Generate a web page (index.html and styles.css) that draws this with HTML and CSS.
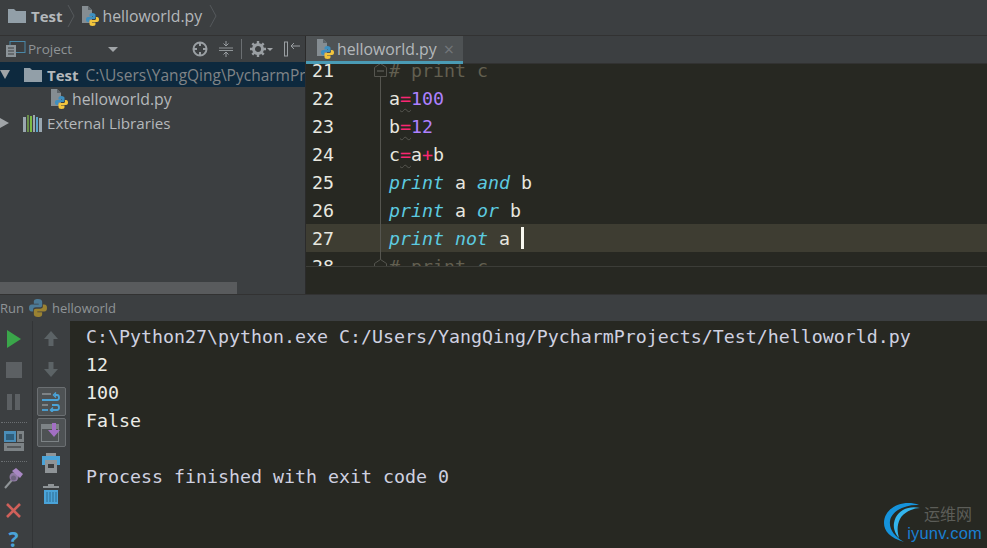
FILE: index.html
```html
<!DOCTYPE html>
<html lang="en">
<head>
  <meta charset="UTF-8">
  <title>helloworld.py - PyCharm</title>
  <link rel="stylesheet" href="styles.css">
</head>
<body>
  <svg class="defs" width="0" height="0">
    <symbol id="py" viewBox="0 0 18 20">
      <path d="M1 0h6l4 4v13H1z" fill="#858d92"/>
      <path d="M7 0v4h4z" fill="#5d6469"/>
      <path d="M11.500 7C9 7 8.500 8 8.500 9V10.500H12V11H7C5.500 11 5 12 5 13.500C5 15 5.500 16 7 16H8V14.500C8 13.500 8.800 13 10 13H13C14 13 14.500 12.400 14.500 11.500V9C14.500 8 13.500 7 11.500 7z" fill="#3d8fc0"/>
      <path d="M11.500 20C14 20 14.500 19 14.500 18V16.500H11V16H16C17.500 16 18 15 18 13.500C18 12 17.500 11 16 11H15V12.500C15 13.500 14.200 14 13 14H10C9 14 8.500 14.600 8.500 15.500V18C8.500 19 9.500 20 11.500 20z" fill="#f2c53d"/>
    </symbol>
    <symbol id="folder" viewBox="0 0 18 14">
      <path d="M0 0h6l2 2h10v12H0z" fill="#929fa8"/>
    </symbol>
    <symbol id="fold" viewBox="0 0 13 14">
      <path d="M0.500 4.500L6.500 0.500l6 4v9h-12z" fill="#272822" stroke="#55554f"/>
      <path d="M3 8h7" stroke="#6b6b64"/>
    </symbol>
  </svg>

  <header class="crumbs">
    <svg class="ico-folder"><use href="#folder"/></svg>
    <b class="crumb-name">Test</b>
    <svg class="sep" width="8" height="22" viewBox="0 0 8 22"><path d="M1 0l6 11-6 11" fill="none" stroke="#55595c"/></svg>
    <svg class="ico-py"><use href="#py"/></svg>
    <span class="crumb-file">helloworld.py</span>
    <svg class="sep" width="8" height="22" viewBox="0 0 8 22"><path d="M1 0l6 11-6 11" fill="none" stroke="#55595c"/></svg>
  </header>

  <div class="main">
    <aside class="side">
      <div class="side-bar">
        <svg width="22" height="16" viewBox="0 0 22 16" class="proj-ico">
          <rect x="5" y="0.500" width="15" height="11" fill="none" stroke="#4a88a8"/>
          <rect x="1" y="4" width="10" height="12" fill="#8c9499"/>
          <path d="M3 7h6M3 10h6M3 13h6" stroke="#3c3f41"/>
        </svg>
        <span class="side-title">Project</span>
        <span class="caret"></span>
        <svg class="tool tool-target" width="16" height="16" viewBox="0 0 16 16"><circle cx="8" cy="8" r="6.500" fill="none" stroke="#9a9fa3" stroke-width="2"/><path d="M8 1v4M8 11v4M1 8h4M11 8h4" stroke="#9a9fa3" stroke-width="2"/></svg>
        <svg class="tool tool-collapse" width="16" height="16" viewBox="0 0 16 16"><path d="M1 7h14M1 9.500h14" stroke="#8f9497"/><path d="M8 0v4M5.500 2.500L8 5l2.500-2.500M8 16v-4M5.500 13.500L8 11l2.500 2.500" fill="none" stroke="#9a9fa3"/></svg>
        <span class="tool-div"></span>
        <svg class="tool tool-gear" width="16" height="16" viewBox="0 0 16 16"><circle cx="8" cy="8" r="4.500" fill="none" stroke="#9a9fa3" stroke-width="3"/><path d="M8 0v3M8 13v3M0 8h3M13 8h3M2.300 2.300l2 2M11.700 11.700l2 2M2.300 13.700l2-2M11.700 4.300l2-2" stroke="#9a9fa3" stroke-width="2.400"/></svg>
        <span class="caret small"></span>
        <svg class="tool tool-hide" width="16" height="16" viewBox="0 0 16 16"><rect x="0.500" y="1" width="3" height="14" fill="none" stroke="#9a9fa3"/><path d="M16 5H7M10 2L7 5l3 3" fill="none" stroke="#9a9fa3"/></svg>
      </div>
      <div class="tree">
        <div class="row row-sel">
          <span class="arrow down"></span>
          <svg class="ico-folder"><use href="#folder"/></svg>
          <b class="root-name">Test</b>
          <span class="root-path">C:\Users\YangQing\PycharmProjects\Test</span>
        </div>
        <div class="row row-file">
          <svg class="ico-py"><use href="#py"/></svg>
          <span>helloworld.py</span>
        </div>
        <div class="row">
          <span class="arrow right"></span>
          <svg class="lib" width="19" height="17" viewBox="0 0 19 17">
            <rect x="0" y="2" width="3" height="15" fill="#9aa7b0"/>
            <rect x="4" y="0" width="2" height="17" fill="#6a8f4a"/>
            <rect x="7" y="1" width="2" height="16" fill="#7dbb45"/>
            <rect x="10" y="0" width="2" height="17" fill="#9aa7b0"/>
            <rect x="13" y="2" width="2" height="15" fill="#5ba3c9"/>
            <rect x="16" y="3" width="3" height="14" fill="#9aa7b0"/>
          </svg>
          <span class="lib-name">External Libraries</span>
        </div>
      </div>
      <div class="side-scroll"><div class="side-thumb"></div></div>
    </aside>

    <section class="editor">
      <div class="tabs">
        <div class="tab">
          <svg class="ico-py"><use href="#py"/></svg>
          <span class="tab-name">helloworld.py</span>
          <span class="tab-x">×</span>
        </div>
      </div>
      <div class="code-view">
        <div class="code">
          <div class="line"><span class="num">21</span><span class="gut gut-low"></span><svg class="fold"><use href="#fold"/></svg><span class="cm"># print c</span></div>
          <div class="line"><span class="num">22</span><span class="gut"></span><span>a<i class="op warn">=</i><i class="n">100</i></span></div>
          <div class="line"><span class="num">23</span><span class="gut"></span><span>b<i class="op warn">=</i><i class="n">12</i></span></div>
          <div class="line"><span class="num">24</span><span class="gut"></span><span>c<i class="op warn">=</i>a<i class="op">+</i>b</span></div>
          <div class="line"><span class="num">25</span><span class="gut"></span><span><em>print</em> a <em>and</em> b</span></div>
          <div class="line"><span class="num">26</span><span class="gut"></span><span><em>print</em> a <em>or</em> b</span></div>
          <div class="line line-cur"><span class="num">27</span><span class="gut"></span><span><em>print</em> <em>not</em> a <span class="caret-bar"></span></span></div>
          <div class="line"><span class="num">28</span><span class="gut gut-high"></span><svg class="fold"><use href="#fold"/></svg><span class="cm"># print c</span></div>
        </div>
      </div>
    </section>
  </div>

  <div class="run-head">
    <span>Run</span>
    <svg class="run-py" width="18" height="18" viewBox="5 7 13 13">
      <path d="M11.500 7C9 7 8.500 8 8.500 9V10.500H12V11H7C5.500 11 5 12 5 13.500C5 15 5.500 16 7 16H8V14.500C8 13.500 8.800 13 10 13H13C14 13 14.500 12.400 14.500 11.500V9C14.500 8 13.500 7 11.500 7z" fill="#4c7a96"/>
      <path d="M11.500 20C14 20 14.500 19 14.500 18V16.500H11V16H16C17.500 16 18 15 18 13.500C18 12 17.500 11 16 11H15V12.500C15 13.500 14.200 14 13 14H10C9 14 8.500 14.600 8.500 15.500V18C8.500 19 9.500 20 11.500 20z" fill="#9a8232"/>
    </svg>
    <span>helloworld</span>
  </div>

  <div class="run">
    <div class="rail rail-a">
      <svg class="r1" width="14" height="18" viewBox="0 0 14 18"><path d="M0 0l14 9-14 9z" fill="#3aa64a"/></svg>
      <span class="stop"></span>
      <span class="pause"><i></i><i></i></span>
      <span class="dots"></span>
      <svg class="r-layout" width="20" height="20" viewBox="0 0 20 20">
        <rect x="0" y="0" width="12" height="11" fill="#4a8db8"/><rect x="2" y="3" width="8" height="6" fill="#2f5e7c"/>
        <rect x="13" y="0" width="7" height="11" fill="#7d8386"/><rect x="15" y="3" width="3" height="5" fill="#4a4f52"/>
        <rect x="0" y="12" width="20" height="8" fill="#7d8386"/><rect x="3" y="15" width="14" height="2" fill="#55595c"/>
      </svg>
      <span class="dots d2"></span>
      <svg class="r-pin" width="20" height="22" viewBox="0 0 20 22"><path d="M1 21l7-8" stroke="#8f9497" stroke-width="2"/><circle cx="10" cy="10" r="4.500" fill="#8f7aa3"/><path d="M8 4l4-3 7 6-3 4z" fill="#a988c4"/><circle cx="9.500" cy="11" r="2.500" fill="#6f6480"/></svg>
      <svg class="r-x" width="15" height="15" viewBox="0 0 15 15"><path d="M1 1l13 13M14 1L1 14" stroke="#d0605a" stroke-width="2.600"/></svg>
      <span class="r-q">?</span>
    </div>
    <div class="rail rail-b">
      <svg class="a-up" width="14" height="15" viewBox="0 0 14 15"><path d="M7 0l7 8H9.500v7h-5V8H0z" fill="#5c6366"/></svg>
      <svg class="a-dn" width="14" height="15" viewBox="0 0 14 15"><path d="M7 15l7-8H9.500V0h-5v7H0z" fill="#5c6366"/></svg>
      <div class="btn btn-wrap">
        <svg width="20" height="20" viewBox="0 0 20 20"><path d="M1 2h9M1 13h6" stroke="#8f9497" stroke-width="1.500"/><path d="M1 8h15q2 0 2-2.500T16 3h-2" fill="none" stroke="#4aa3d8" stroke-width="1.800"/><path d="M15 0.500L12.500 3 15 5.500" fill="none" stroke="#4aa3d8" stroke-width="1.500"/><path d="M10 18h6q2 0 2-2.500T16 13h-5" fill="none" stroke="#4aa3d8" stroke-width="1.800"/><path d="M12 15.500L9.500 18l2.500 2.500" fill="none" stroke="#4aa3d8" stroke-width="1.500"/><path d="M1 18h6" stroke="#4aa3d8" stroke-width="1.800"/></svg>
      </div>
      <div class="btn btn-scroll">
        <svg width="20" height="20" viewBox="0 0 20 20"><rect x="0.500" y="1.500" width="17" height="17" fill="none" stroke="#7d8386"/><rect x="1" y="2" width="16" height="4" fill="#7d8386"/><path d="M11 0h4v7h4l-6 7-6-7h4z" fill="#a26fc4"/></svg>
      </div>
      <svg class="b-print" width="18" height="20" viewBox="0 0 18 20"><rect x="4" y="0" width="10" height="4" fill="#8f9497"/><rect x="0" y="3" width="18" height="9" fill="#4aa3d8"/><rect x="3" y="7" width="12" height="13" fill="#8f9497"/><rect x="6" y="11" width="6" height="4" fill="#3c3f41"/></svg>
      <svg class="b-trash" width="18" height="20" viewBox="0 0 18 20"><path d="M6 2V0h6v2h5v2H1V2z" fill="#8f9497"/><path d="M2 6h14v14H2z" fill="#4aa3d8"/><path d="M5 8v10M8 8v10M11 8v10M14 8v10" stroke="#2f6b8f"/></svg>
    </div>
    <pre class="console"><span class="proc">C:\Python27\python.exe C:/Users/YangQing/PycharmProjects/Test/helloworld.py</span>
12
100
False

<span class="proc">Process finished with exit code 0</span></pre>
    <div class="mark">
      <svg class="mark-arc" width="42" height="44" viewBox="0 0 42 44">
        <path d="M37 4C22-2 2 6 2 22C2 30 8 37 22 41C12 35 7 28 8 20C9 11 22 3 37 4z" fill="#1593dc"/>
        <path d="M38 7C26 4 14 10 12 22C11 28 14 34 17 37C15 30 15 24 18 18C21 12 30 7 38 7z" fill="#33b5ee"/>
      </svg>
      <div class="mark-text">
        <span class="mark-cn">运维网</span>
        <span class="mark-en">iyunv.com</span>
      </div>
    </div>
  </div>
</body>
</html>
```

FILE: styles.css
```css
* {
    box-sizing: border-box;
}

html, body {
    height: 100%;
}

body {
    margin: 0;
    width: 987px;
    height: 548px;
    overflow: hidden;
    font-family: "Open Sans", "Liberation Sans", sans-serif;
    font-size: 15px;
    color: #bbbbbb;
    background-color: #3c3f41;
}

.defs {
    position: absolute;
}

.ico-folder {
    width: 18px;
    height: 14px;
    flex: none;
}

.ico-py {
    width: 18px;
    height: 20px;
    flex: none;
}

/* top breadcrumb */
.crumbs {
    display: flex;
    align-items: center;
    height: 36px;
    padding: 0 0 4px 8px;
    background-color: #3c3f41;
    border-bottom: 1px solid #323232;
}
.crumb-name {
    margin-left: 5px;
    color: #b4b8bb;
}
.crumbs .sep {
    margin: 0 6px 0 4px;
}
.crumb-file {
    margin-left: 4px;
    margin-right: 3px;
    font-size: 15.8px;
    color: #b4b8bb;
}

.main {
    display: flex;
    height: 258px;
}

/* project panel */
.side {
    display: flex;
    flex-direction: column;
    width: 306px;
    flex: none;
    border-right: 1px solid #2b2b2b;
}
.side-bar {
    display: flex;
    align-items: center;
    height: 26px;
    padding-left: 5px;
    flex: none;
}
.proj-ico {
    flex: none;
}
.side-title {
    margin-left: 1px;
    font-size: 13.5px;
    color: #8f9497;
}
.caret {
    width: 0;
    height: 0;
    margin-left: 36px;
    border-left: 5px solid transparent;
    border-right: 5px solid transparent;
    border-top: 5px solid #a0a4a7;
}
.caret.small {
    margin: 0 11px 0 1px;
    border-width: 3px 3px 0;
    border-top-color: #a0a4a7;
}
.tool {
    flex: none;
}
.tool-target {
    margin: 0 10px 0 74px;
}
.tool-collapse {
    margin-right: 7px;
}
.tool-div {
    width: 1px;
    height: 20px;
    margin-right: 8px;
    background-color: #6b6f72;
}

.tree {
    flex: 1;
    overflow: hidden;
}
.row {
    display: flex;
    align-items: center;
    height: 24px;
    white-space: nowrap;
    overflow: hidden;
    color: #b4b8bb;
}
.row-sel {
    height: 25px;
    background-color: #0d293e;
}
.row-file {
    padding-left: 50px;
    font-size: 15.8px;
}
.row-file span {
    margin-left: 4px;
}
.arrow {
    width: 0;
    height: 0;
    flex: none;
}
.arrow.down {
    margin-right: 14px;
    border-left: 5px solid transparent;
    border-right: 5px solid transparent;
    border-top: 9px solid #a0a4a7;
}
.arrow.right {
    margin-right: 14px;
    border-top: 5px solid transparent;
    border-bottom: 5px solid transparent;
    border-left: 9px solid #a0a4a7;
}
.root-name {
    margin-left: 5px;
}
.root-path {
    margin-left: 7px;
    font-size: 15.5px;
    color: #808487;
}
.lib {
    flex: none;
}
.lib-name {
    margin-left: 5px;
    font-size: 15.2px;
}
.side-scroll {
    height: 12px;
    flex: none;
    background-color: #3c3f41;
}
.side-thumb {
    width: 237px;
    height: 100%;
    background-color: #595b5d;
}

/* editor */
.editor {
    display: flex;
    flex-direction: column;
    flex: 1;
    min-width: 0;
    background-color: #272822;
}
.tabs {
    height: 28px;
    flex: none;
    background-color: #3c3f41;
    border-bottom: 1px solid #323232;
}
.tab {
    display: flex;
    align-items: center;
    width: 157px;
    height: 28px;
    padding-left: 10px;
    background-color: #4e5254;
    border-bottom: 3px solid #4a9bb5;
}
.tab-name {
    margin-left: 3px;
    font-size: 15.8px;
    color: #b4b8bb;
}
.tab-x {
    margin-left: 7px;
    font-size: 18px;
    line-height: 1;
    color: #72767a;
}

.code-view {
    height: 203px;
    overflow: hidden;
    border-bottom: 1px solid #3c3d38;
}
.code {
    margin-top: -8px;
    font-family: "DejaVu Sans Mono", monospace;
    font-size: 18.27px;
    color: #e6e6df;
}
.line {
    position: relative;
    display: flex;
    align-items: center;
    height: 28px;
    white-space: pre;
}
.line-cur {
    background-color: #3e3d32;
}
.num {
    width: 83px;
    padding-left: 6px;
    flex: none;
    color: #e8e8e0;
}
/* fold guide drawn over the gutter */
.gut {
    position: absolute;
    left: 74px;
    top: 0;
    bottom: 0;
    width: 1px;
    background-color: #55554f;
}
.gut-low {
    top: 20px;
}
.gut-high {
    bottom: 20px;
}
.fold {
    position: absolute;
    left: 68px;
    top: 7px;
    width: 13px;
    height: 14px;
}
.cm {
    color: #625f50;
}
.op {
    font-style: normal;
    color: #f92672;
}
.warn {
    text-decoration: underline wavy #55554f 1px;
    text-underline-offset: 3px;
}
.n {
    font-style: normal;
    color: #ae81ff;
}
.line em {
    color: #5ccbe0;
}
.caret-bar {
    display: inline-block;
    width: 3px;
    height: 22px;
    vertical-align: -4px;
    background-color: #f8f8f0;
}

/* run panel */
.run-head {
    display: flex;
    align-items: center;
    height: 27px;
    font-size: 13px;
    color: #8f9497;
    background-color: #3c3f41;
    border-top: 1px solid #323232;
}
.run-py {
    margin: 0 5px;
}
.run {
    position: relative;
    display: flex;
    height: 227px;
    overflow: hidden;
    background-color: #272822;
}
.rail {
    display: flex;
    flex-direction: column;
    align-items: center;
    flex: none;
    background-color: #3c3f41;
}
.rail-a {
    width: 33px;
    padding: 9px 5px 0 0;
    border-right: 1px solid #323436;
}
.rail-b {
    width: 37px;
    padding: 10px 1px 0 0;
}
.stop {
    width: 16px;
    height: 16px;
    margin-top: 14px;
    flex: none;
    background-color: #5c6063;
}
.pause {
    display: flex;
    gap: 3px;
    margin-top: 16px;
    flex: none;
}
.pause i {
    width: 5px;
    height: 16px;
    background-color: #5c6063;
}
.dots {
    width: 26px;
    margin-top: 12px;
    flex: none;
    border-top: 1px dotted #6b6f72;
}
.d2 {
    margin-top: 10px;
}
.rail-a svg {
    flex: none;
}
.r-layout {
    margin-top: 8px;
}
.r-pin {
    margin-top: 5px;
}
.r-x {
    margin-top: 14px;
}
.r-q {
    margin-top: 7px;
    flex: none;
    font-size: 21px;
    line-height: 29px;
    font-weight: bold;
    color: #4aa3d8;
}
.a-dn {
    margin-top: 16px;
}
.btn {
    display: flex;
    align-items: center;
    justify-content: center;
    width: 29px;
    height: 29px;
    border: 1px solid #6b6f72;
    border-radius: 2px;
    background-color: #4e5254;
}
.btn-wrap {
    margin-top: 10px;
}
.btn-scroll {
    margin-top: 2px;
}
.b-print {
    margin-top: 6px;
}
.b-trash {
    margin-top: 11px;
}
.console {
    flex: 1;
    margin: 0;
    padding: 2px 0 0 16px;
    font-family: "DejaVu Sans Mono", monospace;
    font-size: 18.27px;
    line-height: 28px;
    color: #ecece6;
}
.proc {
    color: #cfd1e0;
}

/* watermark over the console corner */
.mark {
    position: absolute;
    right: 3px;
    bottom: 7px;
    display: flex;
}
.mark-arc {
    position: absolute;
    left: 0;
    top: -2px;
}
.mark-text {
    display: flex;
    flex-direction: column;
    align-items: flex-end;
    width: 102px;
    line-height: 1;
}
.mark-cn {
    margin-right: 12px;
    font-family: "Noto Sans CJK SC", sans-serif;
    font-size: 16px;
    line-height: 20px;
    color: #5c5d58;
}
.mark-en {
    margin-top: 2px;
    margin-right: 2px;
    font-family: "Liberation Sans", sans-serif;
    font-size: 16.5px;
    letter-spacing: 0.2px;
    color: #1a7fd0;
}
```
